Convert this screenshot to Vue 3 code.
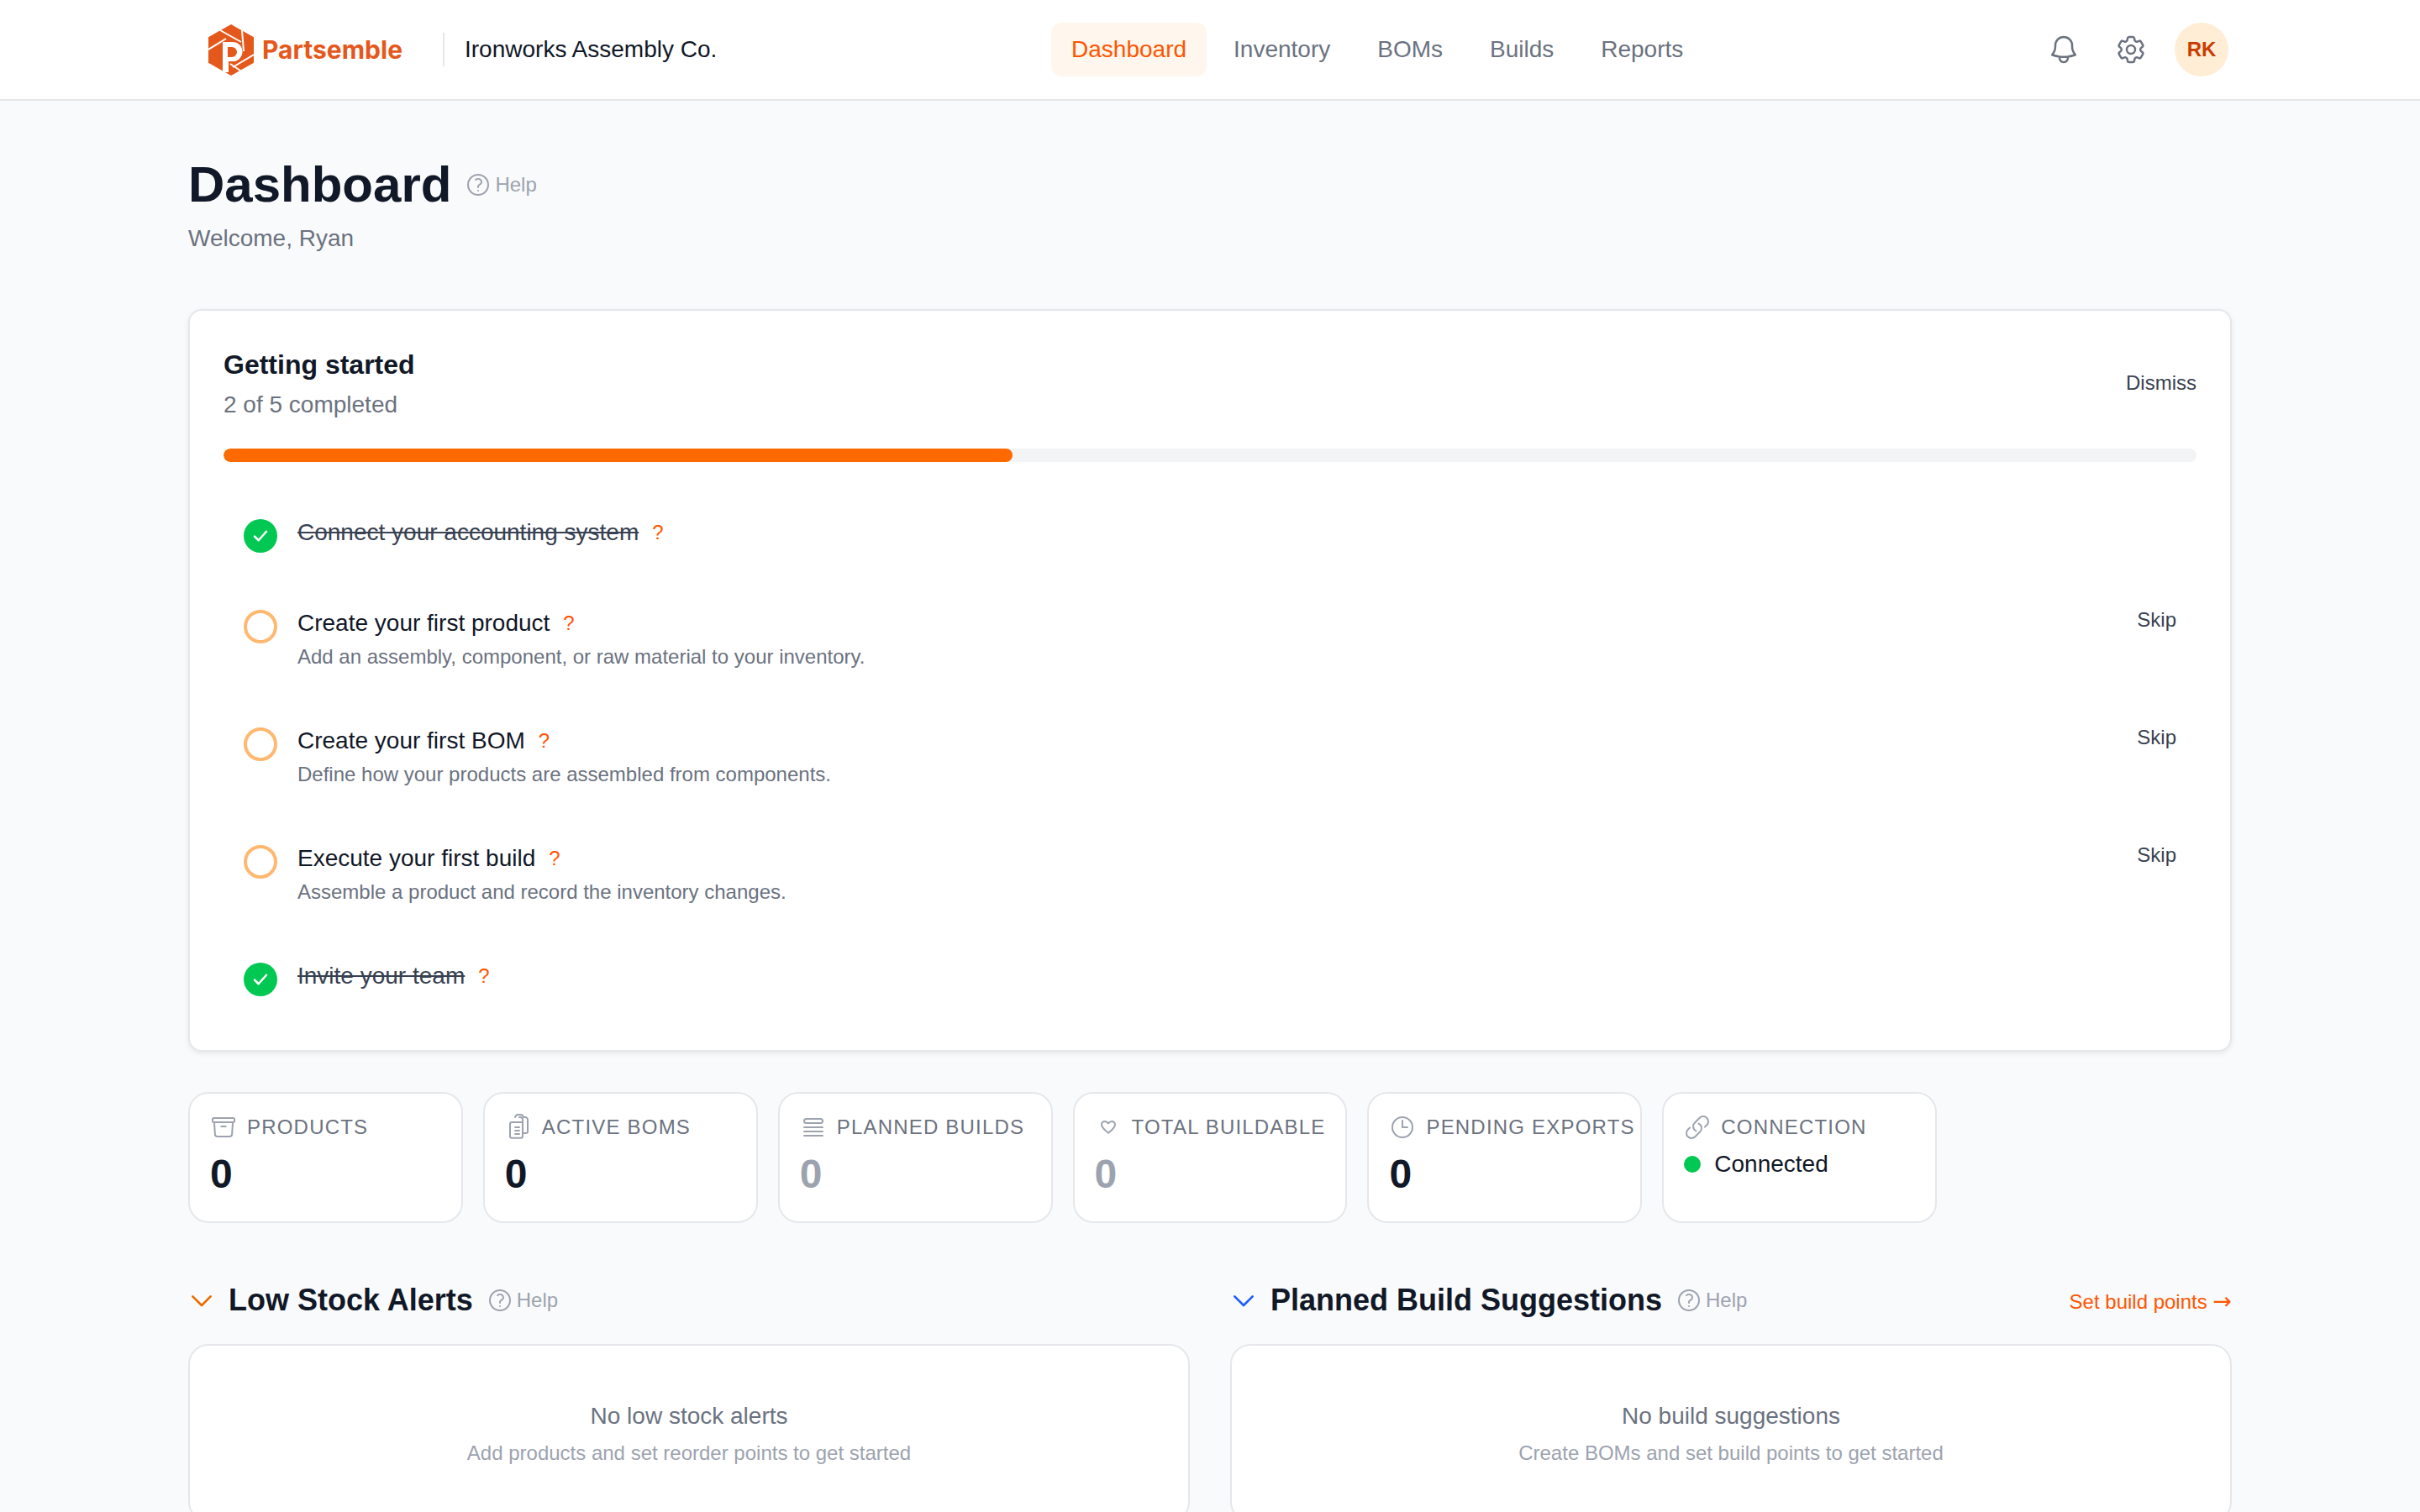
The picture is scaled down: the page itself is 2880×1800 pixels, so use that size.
<script setup>
const steps = [
  { title: 'Connect your accounting system', done: true },
  { title: 'Create your first product', desc: 'Add an assembly, component, or raw material to your inventory.' },
  { title: 'Create your first BOM', desc: 'Define how your products are assembled from components.' },
  { title: 'Execute your first build', desc: 'Assemble a product and record the inventory changes.' },
  { title: 'Invite your team', done: true }
]

const navItems = ['Dashboard', 'Inventory', 'BOMs', 'Builds', 'Reports']

const stats = [
  { label: 'Products', value: 0, icon: 'box' },
  { label: 'Active BOMs', value: 0, icon: 'clipboard' },
  { label: 'Planned Builds', value: 0, icon: 'queue', muted: true },
  { label: 'Total Buildable', value: 0, icon: 'heart', muted: true },
  { label: 'Pending Exports', value: 0, icon: 'clock' },
  { label: 'Connection', icon: 'link', status: 'Connected' }
]

const progress = 40
</script>

<template>
  <div class="page">
    <header class="topbar">
      <div class="topbar-inner">
        <div class="brand">
          <span class="logo">
            <svg width="54" height="61" viewBox="0 0 54 61">
              <path d="M27 0 54 15.200V45.800L27 61 0 45.800V15.200Z" fill="#e5581c" />
              <path d="M14 7 39 21M0 30 21 17M40 7 42 32M54 36 29 51M26 47 41 57" stroke="#fff" stroke-width="2" fill="none" />
              <path fill-rule="evenodd" d="M17 21H29a11.500 11.500 0 0 1 0 23H24V57H17ZM23 27V39H28a6 6 0 0 0 0-12Z" fill="#fff" />
            </svg>
          </span>
          <span class="brand-name">Partsemble</span>
          <span class="brand-divider"></span>
          <span class="org-name">Ironworks Assembly Co.</span>
        </div>

        <nav class="nav">
          <a v-for="(item, i) in navItems" :key="item" class="nav-item" :class="{ active: i === 0 }">{{ item }}</a>
        </nav>

        <div class="actions">
          <button class="icon-btn">
            <svg width="40" height="40" viewBox="0 0 24 24" fill="none" stroke="#6b7280" stroke-width="1.5" stroke-linecap="round" stroke-linejoin="round">
              <path d="M14.857 17.082a23.848 23.848 0 0 0 5.454-1.31A8.967 8.967 0 0 1 18 9.75V9A6 6 0 0 0 6 9v.75a8.967 8.967 0 0 1-2.312 6.022c1.733.64 3.56 1.085 5.455 1.31m5.714 0a24.255 24.255 0 0 1-5.714 0m5.714 0a3 3 0 1 1-5.714 0" />
            </svg>
          </button>
          <button class="icon-btn">
            <svg width="40" height="40" viewBox="0 0 24 24" fill="none" stroke="#6b7280" stroke-width="1.5" stroke-linecap="round" stroke-linejoin="round">
              <path d="M9.594 3.94c.09-.542.56-.94 1.11-.94h2.593c.55 0 1.02.398 1.11.94l.213 1.281c.063.374.313.686.645.87.074.04.147.083.22.127.325.196.72.257 1.075.124l1.217-.456a1.125 1.125 0 0 1 1.37.49l1.296 2.247a1.125 1.125 0 0 1-.26 1.431l-1.003.827c-.293.241-.438.613-.43.992a7.723 7.723 0 0 1 0 .255c-.008.378.137.75.43.991l1.004.827c.424.35.534.955.26 1.43l-1.298 2.247a1.125 1.125 0 0 1-1.369.491l-1.217-.456c-.355-.133-.75-.072-1.076.124a6.47 6.47 0 0 1-.22.128c-.331.183-.581.495-.644.869l-.213 1.281c-.09.543-.56.94-1.11.94h-2.594c-.55 0-1.019-.398-1.11-.94l-.213-1.281c-.062-.374-.312-.686-.644-.87a6.52 6.52 0 0 1-.22-.127c-.325-.196-.72-.257-1.076-.124l-1.217.456a1.125 1.125 0 0 1-1.369-.49l-1.297-2.247a1.125 1.125 0 0 1 .26-1.431l1.004-.827c.292-.24.437-.613.43-.991a6.932 6.932 0 0 1 0-.255c.007-.38-.138-.751-.43-.992l-1.004-.827a1.125 1.125 0 0 1-.26-1.43l1.297-2.247a1.125 1.125 0 0 1 1.37-.491l1.216.456c.356.133.751.072 1.076-.124.072-.044.146-.086.22-.128.332-.183.582-.495.644-.869l.214-1.28Z" />
              <path d="M15 12a3 3 0 1 1-6 0 3 3 0 0 1 6 0Z" />
            </svg>
          </button>
          <div class="avatar">RK</div>
        </div>
      </div>
    </header>

    <main class="content">
      <div class="page-head">
        <div class="title-row">
          <h1>Dashboard</h1>
          <span class="help">
            <svg width="32" height="32" viewBox="0 0 24 24" fill="none" stroke="#9ca3af" stroke-width="1.5" stroke-linecap="round" stroke-linejoin="round">
              <path d="M9.879 7.519c1.171-1.025 3.071-1.025 4.242 0 1.172 1.025 1.172 2.687 0 3.712-.203.179-.43.326-.67.442-.745.361-1.45.999-1.45 1.827v.75M21 12a9 9 0 1 1-18 0 9 9 0 0 1 18 0Zm-9 5.25h.008v.008H12v-.008Z" />
            </svg>
            Help
          </span>
        </div>
        <p class="welcome">Welcome, Ryan</p>
      </div>

      <section class="setup-card">
        <div class="setup-head">
          <div>
            <h2>Getting started</h2>
            <p class="setup-count">2 of 5 completed</p>
          </div>
          <button class="link-btn">Dismiss</button>
        </div>

        <div class="progress">
          <div class="progress-fill" :style="{ width: progress + '%' }"></div>
        </div>

        <ul class="steps">
          <li v-for="step in steps" :key="step.title" class="step">
            <span class="step-mark" :class="{ done: step.done }">
              <svg v-if="step.done" width="28" height="28" viewBox="0 0 24 24" fill="none" stroke="#fff" stroke-width="2.200" stroke-linecap="round" stroke-linejoin="round">
                <path d="m6 12.500 4 4 8-9" />
              </svg>
            </span>
            <div class="step-body">
              <div class="step-title">
                <span :class="{ struck: step.done }">{{ step.title }}</span>
                <span class="step-q">?</span>
              </div>
              <p v-if="step.desc" class="step-desc">{{ step.desc }}</p>
            </div>
            <button v-if="!step.done" class="link-btn">Skip</button>
          </li>
        </ul>
      </section>

      <section class="stats">
        <div v-for="stat in stats" :key="stat.label" class="stat">
          <div class="stat-label">
            <svg class="stat-icon" width="32" height="32" viewBox="0 0 24 24" fill="none" stroke="#9ca3af" stroke-width="1.5" stroke-linecap="round" stroke-linejoin="round">
              <path v-if="stat.icon === 'box'" d="m20.250 7.500-.625 10.632a2.250 2.250 0 0 1-2.247 2.118H6.622a2.250 2.250 0 0 1-2.247-2.118L3.750 7.500M10 11.250h4M3.375 7.500h17.250c.621 0 1.125-.504 1.125-1.125v-1.500c0-.621-.504-1.125-1.125-1.125H3.375c-.621 0-1.125.504-1.125 1.125v1.500c0 .621.504 1.125 1.125 1.125Z" />
              <path v-else-if="stat.icon === 'clipboard'" d="M9 12h3.750M9 15h3.750M9 18h3.750m3-.75V5.250A2.250 2.250 0 0 0 13.500 3h-.75m3 14.250h3a1.500 1.500 0 0 0 1.500-1.500V5.250A2.250 2.250 0 0 0 18 3h-1.500a3 3 0 0 0-3-2.250h-1.500a3 3 0 0 0-3 2.250M15.750 17.250V20a1.500 1.500 0 0 1-1.500 1.500H6A1.500 1.500 0 0 1 4.500 20V9A1.500 1.500 0 0 1 6 7.500h9.750Z" />
              <path v-else-if="stat.icon === 'queue'" d="M3.750 12h16.500m-16.500 3.750h16.500m-16.500 3.750h16.500M5.625 4.500h12.750a1.875 1.875 0 0 1 0 3.750H5.625a1.875 1.875 0 0 1 0-3.750Z" />
              <path v-else-if="stat.icon === 'heart'" d="M18 9.500c0-1.600-1.300-2.800-2.900-2.800-1.200 0-2.300.700-3.100 1.800-.8-1.100-1.900-1.800-3.100-1.800C7.300 6.700 6 7.900 6 9.500c0 3 3.500 5.500 6 7.500 2.500-2 6-4.500 6-7.500Z" />
              <path v-else-if="stat.icon === 'clock'" d="M12 6v6h4.500m4.500 0a9 9 0 1 1-18 0 9 9 0 0 1 18 0Z" />
              <path v-else d="M13.190 8.688a4.500 4.500 0 0 1 1.242 7.244l-4.500 4.500a4.500 4.500 0 0 1-6.364-6.364l1.757-1.757m13.350-.622 1.757-1.757a4.500 4.500 0 0 0-6.364-6.364l-4.500 4.500a4.500 4.500 0 0 0 1.242 7.244" />
            </svg>
            <span>{{ stat.label }}</span>
          </div>
          <div v-if="stat.status" class="stat-status">
            <span class="status-dot"></span>
            {{ stat.status }}
          </div>
          <div v-else class="stat-value" :class="{ muted: stat.muted }">{{ stat.value }}</div>
        </div>
      </section>

      <section class="panels">
        <div class="panel-col">
          <div class="panel-head">
            <div class="panel-title">
              <svg width="32" height="32" viewBox="0 0 24 24" fill="none" stroke="#ea6c00" stroke-width="2" stroke-linecap="round" stroke-linejoin="round">
                <path d="m4 8.500 8 8 8-8" />
              </svg>
              <h3>Low Stock Alerts</h3>
              <span class="help">
                <svg width="32" height="32" viewBox="0 0 24 24" fill="none" stroke="#9ca3af" stroke-width="1.5" stroke-linecap="round" stroke-linejoin="round">
                  <path d="M9.879 7.519c1.171-1.025 3.071-1.025 4.242 0 1.172 1.025 1.172 2.687 0 3.712-.203.179-.43.326-.67.442-.745.361-1.450.999-1.450 1.827v.750M21 12a9 9 0 1 1-18 0 9 9 0 0 1 18 0Zm-9 5.250h.008v.008H12v-.008Z" />
                </svg>
                Help
              </span>
            </div>
          </div>
          <div class="panel">
            <p class="empty-title">No low stock alerts</p>
            <p class="empty-sub">Add products and set reorder points to get started</p>
          </div>
        </div>

        <div class="panel-col">
          <div class="panel-head">
            <div class="panel-title">
              <svg width="32" height="32" viewBox="0 0 24 24" fill="none" stroke="#1d5cff" stroke-width="2" stroke-linecap="round" stroke-linejoin="round">
                <path d="m4 8.500 8 8 8-8" />
              </svg>
              <h3>Planned Build Suggestions</h3>
              <span class="help">
                <svg width="32" height="32" viewBox="0 0 24 24" fill="none" stroke="#9ca3af" stroke-width="1.5" stroke-linecap="round" stroke-linejoin="round">
                  <path d="M9.879 7.519c1.171-1.025 3.071-1.025 4.242 0 1.172 1.025 1.172 2.687 0 3.712-.203.179-.43.326-.67.442-.745.361-1.450.999-1.450 1.827v.750M21 12a9 9 0 1 1-18 0 9 9 0 0 1 18 0Zm-9 5.250h.008v.008H12v-.008Z" />
                </svg>
                Help
              </span>
            </div>
            <a class="panel-link">Set build points <span class="arrow">→</span></a>
          </div>
          <div class="panel">
            <p class="empty-title">No build suggestions</p>
            <p class="empty-sub">Create BOMs and set build points to get started</p>
          </div>
        </div>
      </section>
    </main>
  </div>
</template>

<style>
html, body {
  margin: 0;
  background: #f9fafb;
  overflow: hidden;
}
</style>

<style scoped>
.page {
  min-height: 100vh;
  background: #f9fafb;
  color: #111827;
  font-family: "Liberation Sans", Arial, sans-serif;
}

.topbar {
  background: #fff;
  border-bottom: 2px solid #e5e7eb;
}

.topbar-inner {
  max-width: 2432px;
  height: 118px;
  margin: 0 auto;
  display: flex;
  align-items: center;
  justify-content: space-between;
}

.brand {
  display: flex;
  align-items: center;
  padding-left: 24px;
}

.logo {
  display: flex;
  margin-right: 10px;
}

.brand-name {
  font-family: Inter, "Liberation Sans", sans-serif;
  font-size: 30px;
  font-weight: 700;
  color: #e5581c;
}

.brand-divider {
  width: 2px;
  height: 40px;
  margin: 0 24px 0 48px;
  background: #e5e7eb;
}

.org-name {
  font-size: 28px;
}

.nav {
  display: flex;
  gap: 8px;
  margin-left: 5px;
}

.nav-item {
  padding: 12px 24px;
  border-radius: 12px;
  font-size: 28px;
  line-height: 40px;
  color: #6b7280;
}

.nav-item.active {
  background: #fff7ed;
  color: #ff5500;
}

.actions {
  display: flex;
  align-items: center;
  gap: 8px;
  padding-right: 4px;
}

.icon-btn {
  display: flex;
  padding: 16px;
  border: 0;
  background: none;
}

.avatar {
  width: 64px;
  height: 64px;
  margin-left: 8px;
  display: flex;
  align-items: center;
  justify-content: center;
  border-radius: 50%;
  background: #ffedd5;
  color: #c93c00;
  font-size: 24px;
  font-weight: 700;
}

.content {
  max-width: 2432px;
  margin: 0 auto;
  padding-top: 64px;
}

.title-row {
  display: flex;
  align-items: center;
  gap: 16px;
}

h1 {
  margin: 0;
  font-size: 60px;
  line-height: 72px;
  font-weight: 700;
}

.help {
  display: flex;
  align-items: center;
  gap: 4px;
  font-size: 24px;
  color: #9ca3af;
}

.welcome {
  margin: 8px 0 0;
  font-size: 28px;
  line-height: 40px;
  color: #6b7280;
}

.setup-card {
  margin-top: 64px;
  padding: 40px;
  background: #fff;
  border: 2px solid #e5e7eb;
  border-radius: 16px;
  box-shadow: 0 2px 6px rgba(0, 0, 0, 0.08);
}

.setup-head {
  display: flex;
  align-items: center;
  justify-content: space-between;
}

h2 {
  margin: 0;
  font-size: 32px;
  line-height: 48px;
  font-weight: 700;
}

.setup-count {
  margin: 4px 0 0;
  font-size: 28px;
  line-height: 40px;
  color: #6b7280;
}

.link-btn {
  padding: 0;
  border: 0;
  background: none;
  font-family: inherit;
  font-size: 24px;
  line-height: 32px;
  color: #374151;
}

.progress {
  height: 16px;
  margin-top: 32px;
  border-radius: 8px;
  background: #f3f4f6;
  overflow: hidden;
}

.progress-fill {
  height: 100%;
  border-radius: 8px;
  background: #ff6a00;
}

.steps {
  margin: 40px 0 0;
  padding: 0;
  list-style: none;
  display: flex;
  flex-direction: column;
  gap: 16px;
}

.step {
  display: flex;
  align-items: flex-start;
  gap: 24px;
  padding: 24px;
}

.step-mark {
  flex: none;
  width: 40px;
  height: 40px;
  margin-top: 4px;
  box-sizing: border-box;
  display: flex;
  align-items: center;
  justify-content: center;
  border: 4px solid #ffb870;
  border-radius: 50%;
}

.step-mark.done {
  border: 0;
  background: #00c853;
}

.step-body {
  flex: 1;
}

.step-title {
  display: flex;
  align-items: center;
  gap: 16px;
  font-size: 28px;
  line-height: 40px;
  color: #111827;
}

.struck {
  color: #374151;
  text-decoration: line-through;
}

.step-q {
  font-size: 24px;
  color: #ff5500;
}

.step-desc {
  margin: 4px 0 0;
  font-size: 24px;
  line-height: 32px;
  color: #6b7280;
}

.stats {
  display: grid;
  grid-template-columns: repeat(7, minmax(0, 1fr));
  gap: 24px;
  margin-top: 48px;
}

.stat {
  padding: 24px;
  background: #fff;
  border: 2px solid #e5e7eb;
  border-radius: 24px;
}

.stat-label {
  display: flex;
  align-items: center;
  gap: 12px;
  font-size: 24px;
  line-height: 32px;
  letter-spacing: 1.2px;
  text-transform: uppercase;
  white-space: nowrap;
  color: #6b7280;
}

.stat-icon {
  flex: none;
}

.stat-value {
  margin-top: 8px;
  font-size: 48px;
  line-height: 64px;
  font-weight: 700;
  color: #111827;
}

.stat-value.muted {
  color: #9ca3af;
}

.stat-status {
  display: flex;
  align-items: center;
  gap: 16px;
  margin-top: 8px;
  font-size: 28px;
  line-height: 40px;
  color: #111827;
}

.status-dot {
  width: 20px;
  height: 20px;
  border-radius: 50%;
  background: #00c853;
}

.panels {
  display: grid;
  grid-template-columns: 1fr 1fr;
  gap: 48px;
  margin-top: 68px;
}

.panel-head {
  display: flex;
  align-items: center;
  justify-content: space-between;
  height: 48px;
}

.panel-title {
  display: flex;
  align-items: center;
  gap: 16px;
}

h3 {
  margin: 0;
  font-size: 36px;
  line-height: 48px;
  font-weight: 700;
}

.panel-link {
  font-size: 24px;
  color: #ff5500;
}

.arrow {
  font-family: "DejaVu Sans", sans-serif;
  font-size: 27px;
}

.panel {
  margin-top: 28px;
  padding: 64px;
  text-align: center;
  background: #fff;
  border: 2px solid #e5e7eb;
  border-radius: 24px;
}

.empty-title {
  margin: 0;
  font-size: 28px;
  line-height: 40px;
  color: #6b7280;
}

.empty-sub {
  margin: 8px 0 0;
  font-size: 24px;
  line-height: 32px;
  color: #9ca3af;
}
</style>
